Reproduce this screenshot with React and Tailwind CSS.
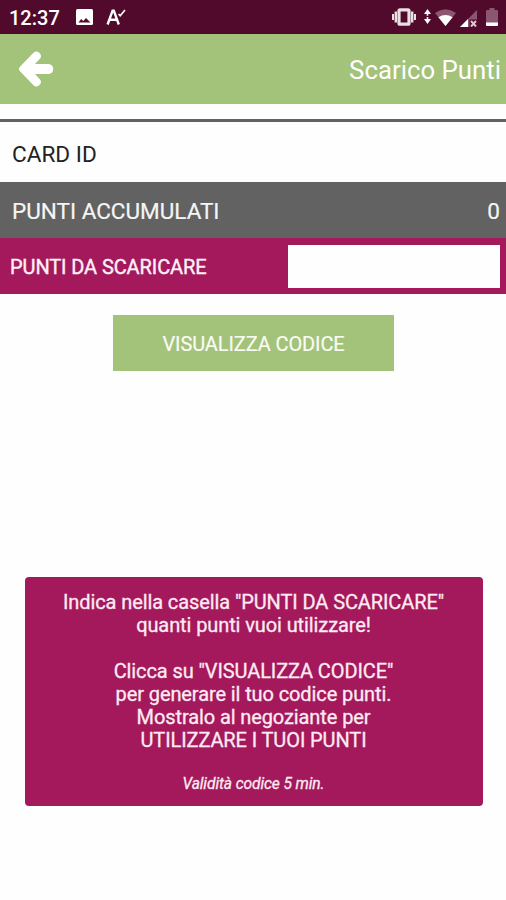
import React from 'react';

const StatusBar = () => (
  <div className="h-[34px] bg-[#520a2c] flex items-center text-white">
    <span className="pl-[9px] w-[76px] pt-[2px] text-[20px] leading-none font-medium">12:37</span>
    <svg className="w-[17px] h-4" viewBox="0 0 17 16">
      <rect width="17" height="16" rx="1.5" fill="#fff" />
      <path d="M2.5 13.5l2.7-3.5 2.1 2L10 9l4.5 4.5z" fill="#520a2c" />
    </svg>
    {/* Spellcheck notification */}
    <svg className="ml-[13px] w-[20px] h-[18px]" viewBox="0 0 20 18" fill="none" stroke="#fff">
      <path d="M1.6 16.5L6.6 2.6h1.2l5 13.9M4 11.8h6.8" strokeWidth="2.4" />
      <path d="M12.6 6l1.6 1.8L19 2" strokeWidth="1.6" />
    </svg>

    <div className="ml-auto mr-[8px] flex items-center">
      {/* Vibrate */}
      <svg className="w-6 h-[18px]" viewBox="0 0 24 18" fill="#eadfe4">
        <path d="M0 6h2v6H0zM2.6 3.5H5v11H2.6zM19 3.5h2.4v11H19zM22 6h2v6h-2z" />
        <rect x="7" y="1.8" width="10" height="14.4" rx="1" fill="#520a2c" stroke="#eadfe4" strokeWidth="3.2" />
      </svg>
      <svg className="ml-[8px] w-[7px] h-4" viewBox="0 0 7 16" fill="#fff">
        <path d="M3.5 0L7 5H4.3v1.7H2.7V5H0zM3.5 15L0 10h2.7V8h1.6v2H7z" />
      </svg>
      {/* Wifi */}
      <svg className="ml-[4px] w-[21px] h-[17px]" viewBox="0 0 21 17">
        <path d="M0 4Q10.5-3.4 21 4L10.5 17z" fill="#8b5670" />
        <path d="M3.4 8.2Q10.5 3.6 17.6 8.2L10.5 17z" fill="#fff" />
      </svg>
      {/* Mobile signal */}
      <svg className="ml-[4px] mt-[2px] w-[17px] h-[17px]" viewBox="0 0 17 17">
        <path d="M17 0v17H0z" fill="#8b5670" />
        <path d="M8 9v8H0z" fill="#fff" />
        <path d="M9.5 9.5H17V17H9.5z" fill="#520a2c" />
        <path d="M11 11l5 5.500M16 11l-5 5.500" stroke="#d9c6ce" strokeWidth="2" />
      </svg>
      {/* Battery */}
      <svg className="ml-[9px] w-[12px] h-[18px]" viewBox="0 0 12 18">
        <path d="M3.5 0h5v2H11q1 0 1 1v14q0 1-1 1H1q-1 0-1-1V3q0-1 1-1h2.5z" fill="#8b5670" />
        <path d="M0 14.5h12V17q0 1-1 1H1q-1 0-1-1z" fill="#fff" />
      </svg>
    </div>
  </div>
);

const Header = () => (
  <header className="h-[70px] bg-[#a3c27a] flex items-center justify-between pl-[18px] pr-[5px]">
    <button type="button" aria-label="Indietro">
      <svg className="w-[36px] h-[38px]" viewBox="0 0 36 38" fill="#fff">
        <path d="M.8 19q0-1.2 1.4-2.6L15.5 2.8q2.5-2.3 5.4-.3 3.8 3.2.8 6.6L17 14h13.5q4.7.6 4.7 5t-4.7 5H17l4.7 5q3 3.4-.8 6.5-2.9 2-5.4-.3L2.2 21.600Q.8 20.200.8 19z" />
      </svg>
    </button>
    <h1 className="text-[25.8px] leading-none text-white mt-[4px]">Scarico Punti</h1>
  </header>
);

const App = () => {
  return (
    <div className="w-full h-[900px] bg-[#fefefe] font-[Roboto,sans-serif] overflow-hidden">
      <StatusBar />
      <Header />

      <main>
        <div className="mt-[15px] h-[63px] border-t-[3px] border-[#626262] pl-[12px] flex items-center text-[22.6px] text-[#222]">
          <span className="mt-[6px]">CARD ID</span>
        </div>
        <div className="h-[56px] bg-[#626262] pl-[12px] pr-[6px] flex items-center justify-between text-[22.5px] text-[#f5f5f5] [-webkit-text-stroke:0.2px]">
          <span className="mt-[3px]">PUNTI ACCUMULATI</span>
          <span className="mt-[3px]">0</span>
        </div>
        <div className="h-[56px] bg-[#a3195b] pl-[10px] pr-[6px] flex items-center justify-between text-[20px] text-[#fdeff6]">
          <label htmlFor="punti" className="mt-[2px] tracking-[-0.1px] [-webkit-text-stroke:0.4px]">
            PUNTI DA SCARICARE
          </label>
          <input id="punti" type="text" className="w-[212px] h-[43px] bg-[#fefefe] px-2 text-[#222] outline-none" />
        </div>

        <button
          type="button"
          className="mt-[21px] mx-auto block w-[281px] h-[56px] bg-[#a3c27a] pt-[2px] pl-px text-[20px] tracking-[-0.1px] text-[#f8fcf3] [-webkit-text-stroke:0.2px]"
        >
          VISUALIZZA CODICE
        </button>

        <div className="mt-[206px] ml-[25px] w-[458px] h-[229px] rounded-[4px] bg-[#a3195b] pt-[14px] pr-px text-center text-[20px] leading-[23px] tracking-[-0.1px] text-[#fdeaf3] [-webkit-text-stroke:0.3px]">
          <p>
            Indica nella casella "PUNTI DA SCARICARE"
            <br />
            quanti punti vuoi utilizzare!
          </p>
          <p className="mt-[23px]">
            Clicca su "VISUALIZZA CODICE"
            <br />
            per generare il tuo codice punti.
            <br />
            Mostralo al negoziante per
            <br />
            UTILIZZARE I TUOI PUNTI
          </p>
          <p className="mt-[21px] text-[15.6px] italic">Validità codice 5 min.</p>
        </div>
      </main>
    </div>
  );
};

export default App;
